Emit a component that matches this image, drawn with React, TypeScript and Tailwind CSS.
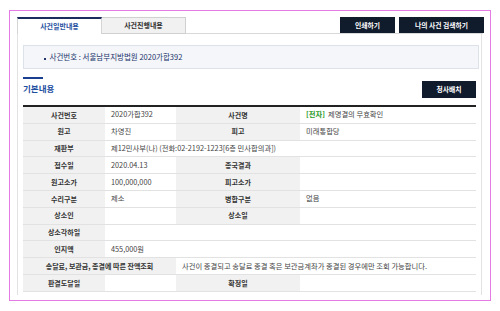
import React from "react";

const F = { fontFamily: '"Noto Sans CJK KR", "Noto Sans", sans-serif' };

function Label({ children, span = 1 }: { children?: React.ReactNode; span?: number }) {
  return (
    <div
      className={`${span === 2 ? "col-span-2" : ""} h-[16.8px] flex items-center justify-center bg-[#f1f1f1] border-b border-[#e2e2e2] text-[7px] font-bold text-[#333]`}
    >
      {children}
    </div>
  );
}

function Value({ children, span = 1 }: { children?: React.ReactNode; span?: number }) {
  const cls = span === 3 ? "col-span-3" : span === 2 ? "col-span-2" : "";
  return (
    <div className={`${cls} h-[16.8px] flex items-center pl-[6px] bg-white border-b border-[#e2e2e2] text-[7.3px] text-[#444] whitespace-nowrap`}>
      {children}
    </div>
  );
}

export default function App() {
  return (
    <div className="w-[500px] h-[311px] bg-white overflow-hidden pt-[10px] pl-[9px]" style={F}>
      <div className="w-[482px] h-[291px] border border-[#e47be4] pl-[7px] pt-[6px]">
        {/* top row */}
        <div className="flex items-start w-[466px]">
          <div className="w-[85px] h-[17px] bg-white border-t-2 border-[#1b2d5c] border-l border-r border-l-[#d5d5d5] border-r-[#d5d5d5] flex items-center justify-center text-[7px] font-bold text-[#1f4fa0]">
            사건일반내용
          </div>
          <div className="w-[84px] h-[17px] bg-[#f1f1f1] border-t border-r border-b border-[#d0d0d0] flex items-center justify-center text-[7px] font-bold text-[#333]">
            사건진행내용
          </div>
          <div className="flex-1 h-[17px] border-b border-[#d9d9d9] flex justify-end items-start gap-[4px]">
            <div className="w-[55px] h-[16px] bg-[#101b2c] flex items-center justify-center text-[6.8px] font-bold text-white">
              인쇄하기
            </div>
            <div className="w-[85px] h-[16px] bg-[#101b2c] flex items-center justify-center text-[6.8px] font-bold text-white -mr-[1px]">
              나의 사건 검색하기
            </div>
          </div>
        </div>

        {/* panel */}
        <div className="w-[465px] h-[261px] border-l border-r border-[#e2e2e2] pl-[5px] pt-[11px]">
          <div className="w-[456px] h-[24px] bg-[#f4f6fa] border border-[#dde2ea] flex items-center pl-[20px] text-[7.5px] text-[#23346a]">
            <span className="inline-block w-[1.5px] h-[1.5px] bg-[#23346a] mt-[4px] mr-[4px]" />
            사건번호 : 서울남부지방법원 2020가합392
          </div>

          <div className="w-[453px] flex justify-between items-start mt-[8px]">
            <div className="flex flex-col">
              <div className="w-[20px] h-[2px] bg-[#1a3f8f]" />
              <div className="text-[8.5px] font-bold text-[#1d4ea0] leading-none mt-[5px]">기본내용</div>
            </div>
            <div className="w-[54px] h-[17px] bg-[#101b2c] flex items-center justify-center text-[6.8px] font-bold text-white mt-[4px]">
              청사배치
            </div>
          </div>

          <div className="w-[453px] mt-[7px] border-t-2 border-[#222] grid grid-cols-[82px_71px_124px_176px]">
            <Label>사건번호</Label>
            <Value>2020가합392</Value>
            <Label>사건명</Label>
            <Value>
              <span className="font-bold text-[#2a9a2a] mr-[3px]">[전자]</span>제명결의 무효확인
            </Value>

            <Label>원고</Label>
            <Value>차영진</Value>
            <Label>피고</Label>
            <Value>미래통합당</Value>

            <Label>재판부</Label>
            <Value span={3}>제12민사부(나) (전화:02-2192-1223[6층 민사합의과])</Value>

            <Label>접수일</Label>
            <Value>2020.04.13</Value>
            <Label>종국결과</Label>
            <Value />

            <Label>원고소가</Label>
            <Value>100,000,000</Value>
            <Label>피고소가</Label>
            <Value />

            <Label>수리구분</Label>
            <Value>제소</Value>
            <Label>병합구분</Label>
            <Value>없음</Value>

            <Label>상소인</Label>
            <Value />
            <Label>상소일</Label>
            <Value />

            <Label>상소각하일</Label>
            <Value span={3} />

            <Label>인지액</Label>
            <Value span={3}>455,000원</Value>

            <Label span={2}>송달료, 보관금, 종결에 따른 잔액조회</Label>
            <Value span={2}>사건이 종결되고 송달료 종결 혹은 보관금계좌가 종결된 경우에만 조회 가능합니다.</Value>

            <Label>판결도달일</Label>
            <Value />
            <Label>확정일</Label>
            <Value />
          </div>
        </div>
      </div>
    </div>
  );
}
